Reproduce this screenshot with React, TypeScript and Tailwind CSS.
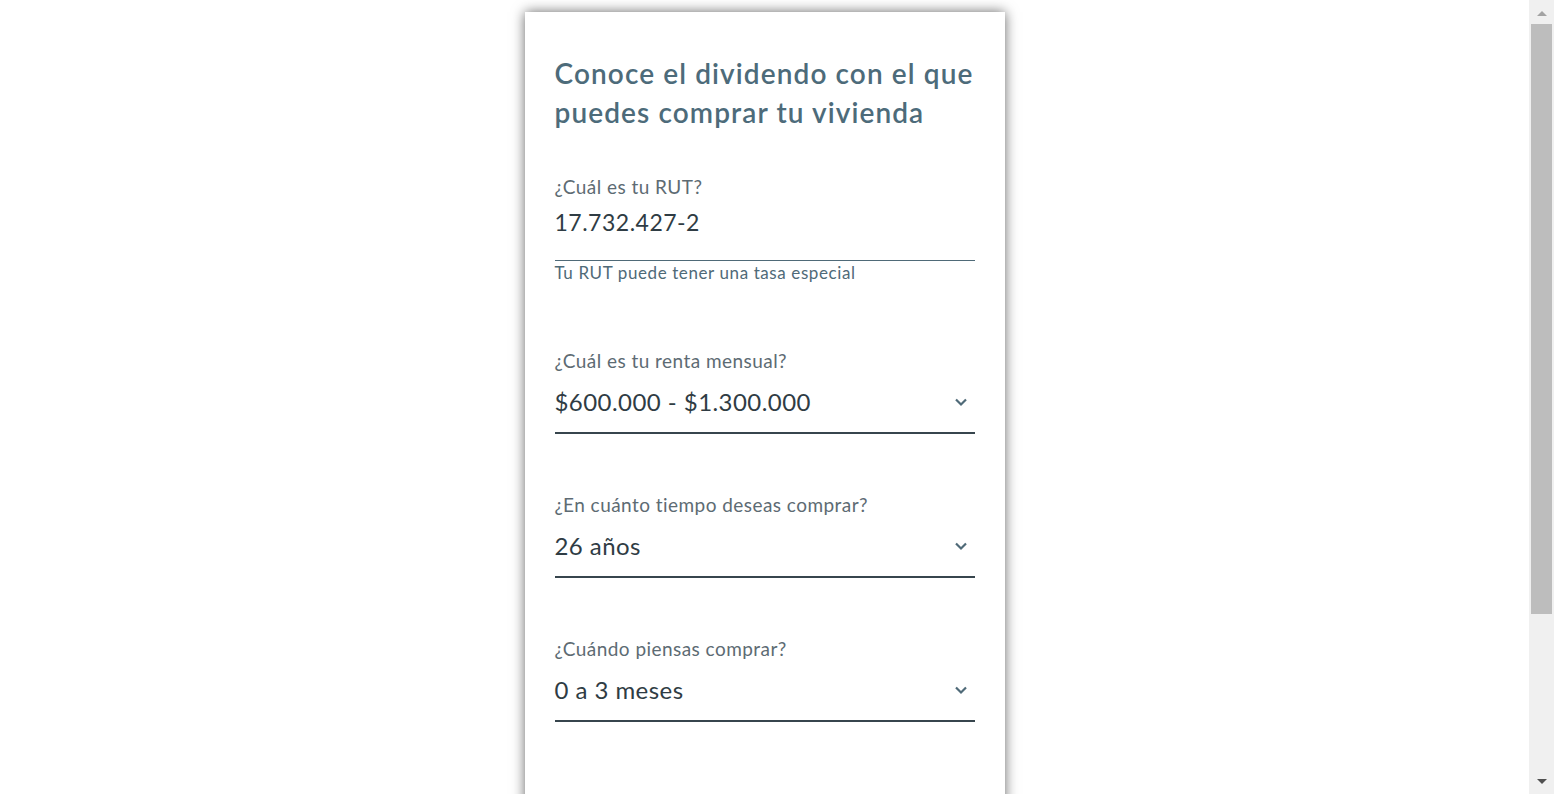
import React from "react";

const Chevron = () => (
  <svg width="14" height="10" viewBox="0 0 14 10" className="shrink-0">
    <path d="M2 2.5 L7 7.5 L12 2.5" fill="none" stroke="#4f6a78" strokeWidth="2.2" />
  </svg>
);

const SelectField = ({ label, value }: { label: string; value: string }) => (
  <div className="flex flex-col">
    <div className="text-[19px] leading-[24px] tracking-[0.45px] text-[#5d6b73]">{label}</div>
    <div className="mt-[13px] flex items-center justify-between pr-[7px] pb-[14px] border-b-2 border-[#37454d]">
      <span className="text-[24px] leading-[32px] tracking-[0.45px] text-[#2f3c44]">{value}</span>
      <Chevron />
    </div>
  </div>
);

export default function App() {
  return (
    <div
      className="flex h-screen w-full overflow-hidden bg-white"
      style={{ fontFamily: "Lato, 'Open Sans', sans-serif" }}
    >
      <div className="flex flex-1 justify-center">
        <div className="mt-3 w-[480px] min-h-[900px] bg-white shadow-[0_0_12px_rgba(0,0,0,0.6)] px-[30px] pt-[42px]">
          <h1 className="whitespace-nowrap text-[28px] leading-[39px] font-semibold tracking-[1.1px] text-[#4d6b7a]">
            Conoce el dividendo con el que
            <br />
            puedes comprar tu vivienda
          </h1>
          <div className="mt-[43px] flex flex-col">
            <div className="text-[19px] leading-[24px] tracking-[0.45px] text-[#5d6b73]">¿Cuál es tu RUT?</div>
            <div className="mt-[8px] pb-[23px] border-b border-[#4f6a78]">
              <span className="text-[23px] leading-[30px] tracking-[0.5px] text-[#2f3c44]">17.732.427-2</span>
            </div>
            <div className="mt-[2px] text-[17px] leading-[20px] tracking-[0.6px] text-[#4f6a78]">
              Tu RUT puede tener una tasa especial
            </div>
          </div>
          <div className="mt-[66px] flex flex-col gap-[59px]">
            <SelectField label="¿Cuál es tu renta mensual?" value="$600.000 - $1.300.000" />
            <SelectField label="¿En cuánto tiempo deseas comprar?" value="26 años" />
            <SelectField label="¿Cuándo piensas comprar?" value="0 a 3 meses" />
          </div>
        </div>
      </div>
      <div className="flex w-[25px] flex-col items-center bg-[#f0f0f0] py-[2px]">
        <div className="flex h-[22px] items-center justify-center">
          <div className="h-0 w-0 border-x-[5px] border-b-[5px] border-x-transparent border-b-[#a3a3a3]" />
        </div>
        <div className="h-[590px] w-[21px] bg-[#bdbdbd]" />
        <div className="flex-1" />
        <div className="flex h-[22px] items-center justify-center">
          <div className="h-0 w-0 border-x-[5px] border-t-[5px] border-x-transparent border-t-[#505050]" />
        </div>
      </div>
    </div>
  );
}
